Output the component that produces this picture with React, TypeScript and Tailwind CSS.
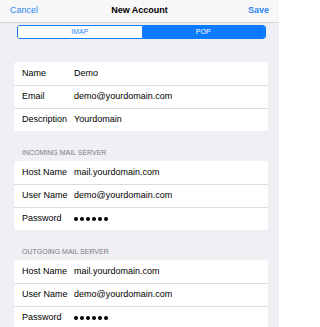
import React from 'react';

type Row = { label: string; value?: string; secret?: boolean };

const account: Row[] = [
  { label: 'Name', value: 'Demo' },
  { label: 'Email', value: 'demo@yourdomain.com' },
  { label: 'Description', value: 'Yourdomain' },
];

const server: Row[] = [
  { label: 'Host Name', value: 'mail.yourdomain.com' },
  { label: 'User Name', value: 'demo@yourdomain.com' },
  { label: 'Password', secret: true },
];

function Dots() {
  return (
    <div className="flex items-center gap-[2px]">
      {[0, 1, 2, 3, 4, 5].map((i) => (
        <span key={i} className="block w-[4px] h-[4px] rounded-full bg-black" />
      ))}
    </div>
  );
}

function Group({ rows }: { rows: Row[] }) {
  return (
    <div className="bg-white rounded-[3px]">
      {rows.map((row, i) => (
        <div
          key={row.label}
          className={`flex items-center h-[23px] pl-[8px] ${i > 0 ? 'border-t border-[#dcdce0]' : ''}`}
        >
          <span className="w-[52px] shrink-0 text-[9px] text-black whitespace-nowrap">{row.label}</span>
          {row.secret ? <Dots /> : <span className="text-[9px] text-black">{row.value}</span>}
        </div>
      ))}
    </div>
  );
}

function SectionTitle({ children }: { children: React.ReactNode }) {
  return (
    <div className="mt-[17px] mb-[3px] h-[10px] pl-[8px] text-[7px] leading-[10px] text-[#7a7a80] uppercase">
      {children}
    </div>
  );
}

export default function App() {
  return (
    <div
      className="w-[279px] h-[327px] overflow-hidden bg-[#efeff4]"
      style={{ fontFamily: '"Liberation Sans", Arial, sans-serif' }}
    >
      <div className="grid grid-cols-[1fr_auto_1fr] items-center h-[23px] px-[10px] bg-[#f7f7f8] border-b border-[#d4d4d8]">
        <button className="justify-self-start text-[9px] text-[#2c86f5]">Cancel</button>
        <div className="text-[9px] font-bold text-black">New Account</div>
        <button className="justify-self-end text-[9px] font-bold text-[#2c86f5]">Save</button>
      </div>

      <div className="pl-[14px] pr-[11px]">
        <div className="mt-[2px] ml-[3px] mr-[2px] h-[14px] flex border border-[#0a7aff] rounded-[3px] overflow-hidden">
          <div className="flex-1 flex items-center justify-center bg-white text-[7px] text-[#2c86f5]">IMAP</div>
          <div className="flex-1 flex items-center justify-center bg-[#0a7aff] text-[7px] text-white">POP</div>
        </div>

        <div className="mt-[23px]">
          <Group rows={account} />
        </div>

        <SectionTitle>Incoming Mail Server</SectionTitle>
        <Group rows={server} />

        <SectionTitle>Outgoing Mail Server</SectionTitle>
        <Group rows={server} />
      </div>
    </div>
  );
}
